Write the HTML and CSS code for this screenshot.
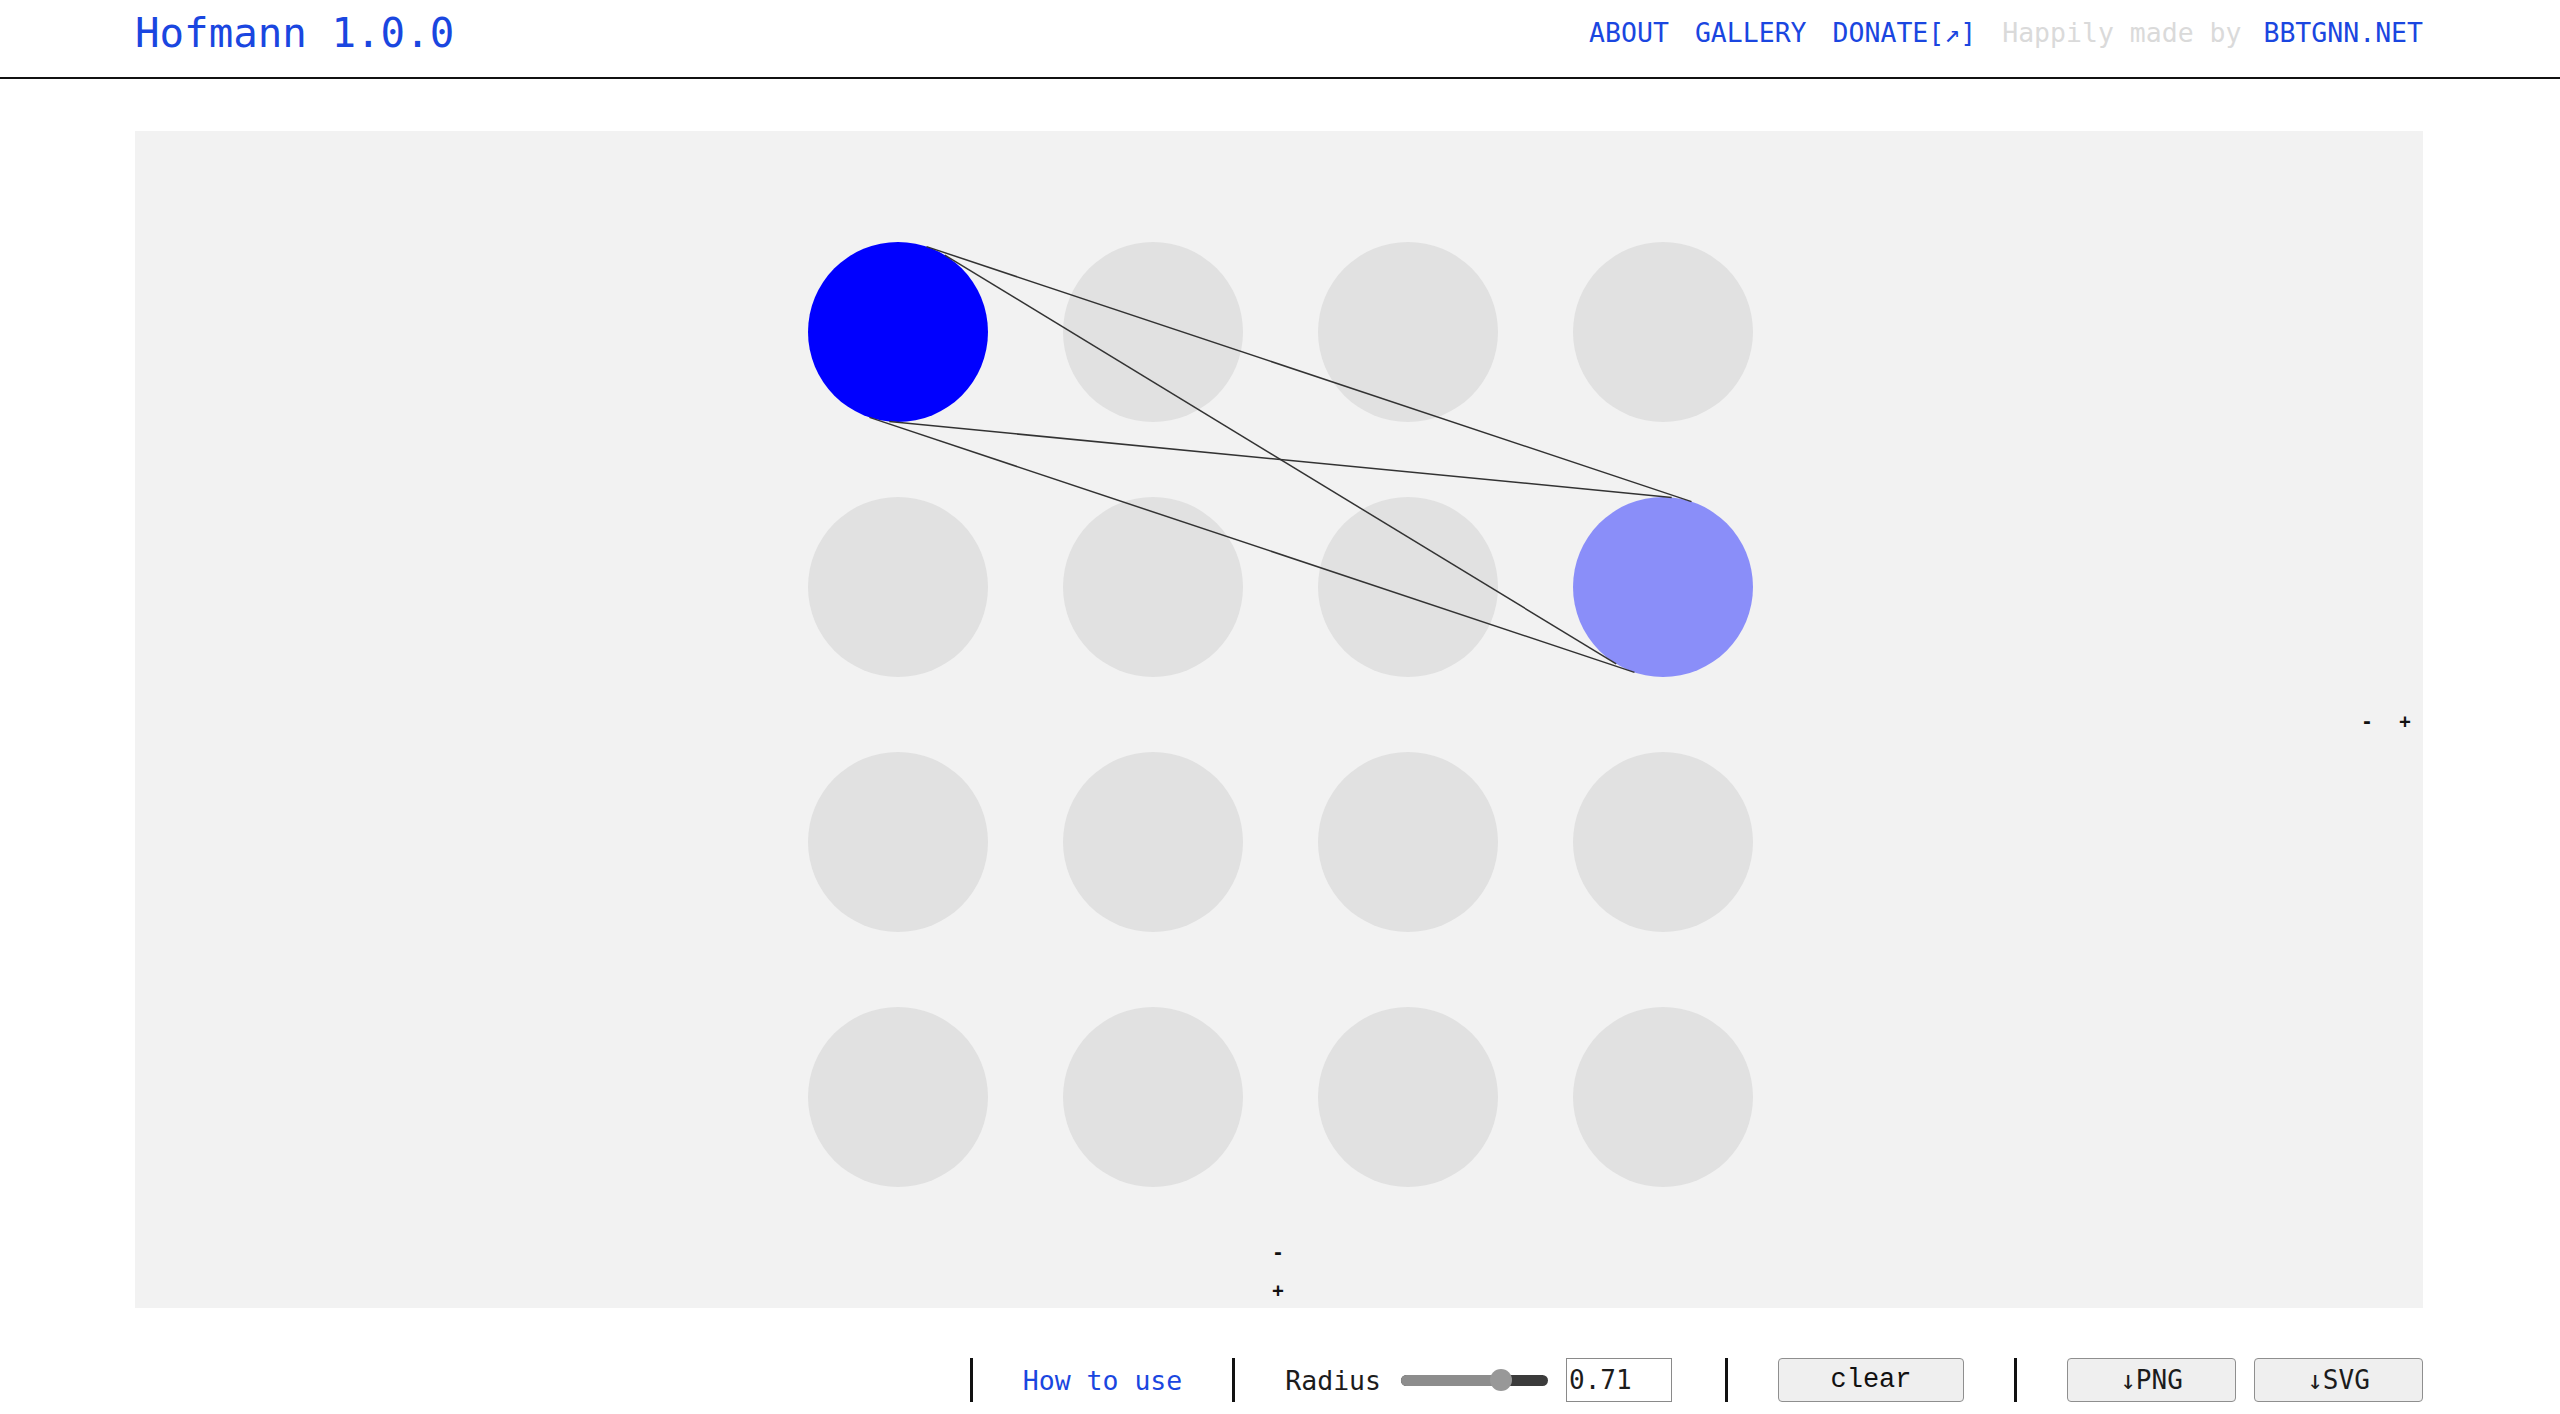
FILE: index.html
```html
<!DOCTYPE html>
<html lang="en">
<head>
<meta charset="utf-8">
<title>Hofmann 1.0.0</title>
<link rel="stylesheet" href="styles.css">
</head>
<body>
<header class="topbar">
  <a class="brand" href="#">Hofmann 1.0.0</a>
  <nav class="nav">
    <a class="nav-link" href="#">ABOUT</a>
    <a class="nav-link" href="#">GALLERY</a>
    <a class="nav-link" href="#">DONATE[↗]</a>
    <span class="credit">Happily made by <a class="nav-link" href="#">BBTGNN.NET</a></span>
  </nav>
</header>

<main class="main">
  <section class="canvas">
    <svg class="drawing" viewBox="0 0 2288 1177" width="2288" height="1177">
      <g class="dots">
        <circle cx="763" cy="201" r="90"/>
        <circle cx="1018" cy="201" r="90"/>
        <circle cx="1273" cy="201" r="90"/>
        <circle cx="1528" cy="201" r="90"/>
        <circle cx="763" cy="456" r="90"/>
        <circle cx="1018" cy="456" r="90"/>
        <circle cx="1273" cy="456" r="90"/>
        <circle cx="1528" cy="456" r="90"/>
        <circle cx="763" cy="711" r="90"/>
        <circle cx="1018" cy="711" r="90"/>
        <circle cx="1273" cy="711" r="90"/>
        <circle cx="1528" cy="711" r="90"/>
        <circle cx="763" cy="966" r="90"/>
        <circle cx="1018" cy="966" r="90"/>
        <circle cx="1273" cy="966" r="90"/>
        <circle cx="1528" cy="966" r="90"/>
      </g>
      <g class="lines">
        <line x1="791.5" y1="115.6" x2="1556.5" y2="370.6"/>
        <line x1="734.5" y1="286.4" x2="1499.5" y2="541.4"/>
        <line x1="809.8" y1="124.1" x2="1481.2" y2="532.9"/>
        <line x1="754.3" y1="290.6" x2="1536.7" y2="366.4"/>
      </g>
    </svg>
    <div class="zoom-cols">
      <button class="mini" type="button">-</button>
      <button class="mini" type="button">+</button>
    </div>
    <div class="zoom-rows">
      <button class="mini" type="button">-</button>
      <button class="mini" type="button">+</button>
    </div>
  </section>

  <div class="toolbar">
    <span class="sep"></span>
    <a class="help" href="#">How to use</a>
    <span class="sep"></span>
    <div class="group">
      <span class="label">Radius</span>
      <div class="slider">
        <div class="track"><div class="fill" style="width:68%"></div></div>
        <div class="thumb" style="left:68%"></div>
      </div>
      <input class="num" type="text" value="0.71">
    </div>
    <span class="sep"></span>
    <button class="btn btn-clear" type="button">clear</button>
    <span class="sep"></span>
    <div class="group">
      <button class="btn btn-dl" type="button">↓PNG</button>
      <button class="btn btn-dl" type="button">↓SVG</button>
    </div>
  </div>
</main>
</body>
</html>
```

FILE: styles.css
```css
html, body {
  margin: 0;
  padding: 0;
  background: #ffffff;
}

body {
  font-family: "DejaVu Sans Mono", "Liberation Mono", monospace;
  color: #1c1c1c;
  overflow: hidden;
}

a {
  text-decoration: none;
}

.topbar {
  height: 65px;
  padding: 0 137px 12px 135px;
  border-bottom: 2px solid #111111;
  display: flex;
  align-items: center;
  justify-content: space-between;
}

.brand {
  font-size: 40.8px;
  color: #1a46e0;
}

.nav {
  display: flex;
  align-items: center;
  gap: 26px;
  font-size: 26.5px;
}

.nav-link {
  color: #1a46e0;
}

.credit {
  color: #dadada;
}

.credit .nav-link {
  margin-left: 6px;
}

.main {
  margin: 52px 137px 0 135px;
}

.canvas {
  position: relative;
  height: 1177px;
  background: #f2f2f2;
  display: flex;
  justify-content: center;
  align-items: center;
  overflow: hidden;
}

.drawing {
  display: block;
  width: 2288px;
  height: 1177px;
}

.dots circle {
  fill: #e1e1e1;
}

.dots circle:first-child {
  fill: #0000ff;
}

.dots circle:nth-child(8) {
  fill: #8a8ef9;
}

.lines line {
  stroke: #333333;
  stroke-width: 1.5;
}

.mini {
  background: none;
  border: 0;
  padding: 0;
  margin: 0;
  font-family: "DejaVu Sans Mono", monospace;
  font-size: 19px;
  font-weight: bold;
  line-height: 20px;
  color: #111111;
  width: 14px;
  text-align: center;
}

.zoom-cols {
  position: absolute;
  right: 11px;
  top: 580px;
  display: flex;
  gap: 24px;
}

.zoom-rows {
  position: absolute;
  left: 1136px;
  bottom: 8px;
  display: flex;
  flex-direction: column;
  gap: 18px;
}

.toolbar {
  margin-top: 50px;
  height: 44px;
  display: flex;
  justify-content: flex-end;
  align-items: center;
  font-size: 26.5px;
}

.sep {
  width: 3px;
  height: 44px;
  background: #111111;
  margin: 0 50px;
}

.help {
  color: #1a46e0;
}

.group {
  display: flex;
  align-items: center;
  gap: 18px;
}

.label {
  margin-right: 2px;
  color: #1c1c1c;
}

.slider {
  position: relative;
  width: 147px;
  height: 22px;
  display: flex;
  align-items: center;
}

.track {
  width: 100%;
  height: 11px;
  border-radius: 6px;
  background: #3b3b3b;
  overflow: hidden;
}

.fill {
  height: 100%;
  background: #8d8d8d;
}

.thumb {
  position: absolute;
  top: 0;
  width: 22px;
  height: 22px;
  margin-left: -11px;
  border-radius: 50%;
  background: #989898;
}

.num {
  box-sizing: border-box;
  width: 106px;
  height: 44px;
  margin-right: 3px;
  border: 1.5px solid #8a8a8a;
  border-radius: 0;
  padding: 0 0 0 2px;
  font-family: "DejaVu Sans Mono", monospace;
  font-size: 26px;
  color: #1c1c1c;
  background: #ffffff;
}

.btn {
  box-sizing: border-box;
  height: 44px;
  border: 1px solid #8f8f8f;
  border-radius: 4px;
  background: #efefef;
  color: #1c1c1c;
  font-size: 26px;
  padding: 0;
}

.btn-clear {
  width: 186px;
  font-family: "Liberation Mono", monospace;
  font-size: 27px;
  color: #111111;
}

.btn-dl {
  width: 169px;
  font-family: "DejaVu Sans Mono", monospace;
}
```
